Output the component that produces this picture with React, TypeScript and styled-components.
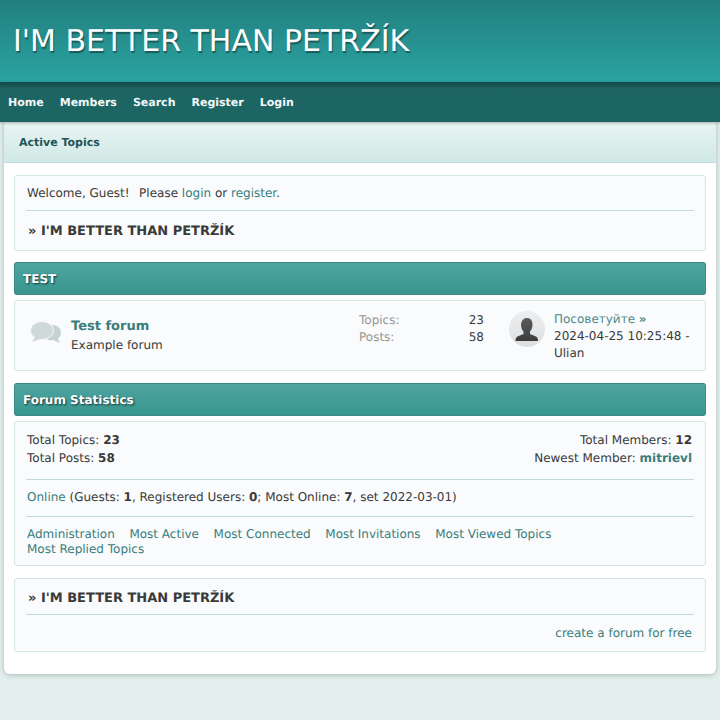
import * as React from "react";
import styled, { createGlobalStyle } from "styled-components";

const GlobalStyle = createGlobalStyle`
  html, body {
    margin: 0;
    padding: 0;
    background: #e3efec;
  }
  body {
    font-family: "DejaVu Sans", sans-serif;
    font-size: 12px;
    color: #3a3a3a;
    text-rendering: geometricPrecision;
  }
  * { box-sizing: border-box; }
`;

const Page = styled.div`
  width: 720px;
  height: 720px;
  overflow: hidden;
`;

const Header = styled.header`
  height: 82px;
  padding: 23px 13px 0;
  background: linear-gradient(#22807f, #2aa3a1);
`;

const Logo = styled.h1`
  margin: 0;
  font-size: 30px;
  line-height: 37px;
  font-weight: 400;
  color: #fff;
  text-shadow: 1px 2px 1px #1a5a5a;
`;

const Nav = styled.nav`
  height: 40px;
  display: flex;
  align-items: center;
  gap: 16px;
  padding: 0 8px;
  background: linear-gradient(#164b4b, #1d6563 16%, #1d6563);
  border-top: 1px solid #174a4a;
  box-shadow: 0 1px 3px rgba(0, 0, 0, 0.3);
  position: relative;
`;

const NavLink = styled.a`
  font-size: 11px;
  font-weight: 700;
  color: #f2f7f7;
`;

const Wrapper = styled.main`
  margin: 0 4px;
  height: 552px;
  background: #fff;
  border-radius: 0 0 6px 6px;
  box-shadow: 0 1px 5px rgba(60, 90, 90, 0.35);
`;

const SubHeader = styled.div`
  height: 41px;
  padding-left: 15px;
  display: flex;
  align-items: center;
  background: linear-gradient(#e9f5f3, #d0e9e6);
  border-bottom: 1px solid #c5dcdc;
  font-size: 11px;
  font-weight: 700;
  color: #1f5556;
`;

const Content = styled.div`
  padding: 12px 10px 0;
  display: flex;
  flex-direction: column;
`;

const Box = styled.section<{ $mt?: number; $h: number }>`
  height: ${(p) => p.$h}px;
  margin-top: ${(p) => p.$mt ?? 0}px;
  background: #f9fbfc;
  border: 1px solid #d2e8e6;
  border-radius: 3px;
  padding: 0 12px;
`;

const Line = styled.div<{ $h?: number }>`
  line-height: ${(p) => p.$h ?? 15}px;
`;

const Please = styled.span`
  margin-left: 9.500px;
`;

const A = styled.a`
  color: #3a7d7d;
`;

const Divider = styled.hr`
  margin: 0 -1px;
  border: 0;
  border-top: 1px solid #bfdcd9;
`;

const Crumb = styled.div<{ $h: number; $pt?: number }>`
  font-size: 13px;
  font-weight: 700;
  padding: ${(p) => p.$pt ?? 0}px 0 0 1px;
  line-height: ${(p) => p.$h}px;
`;

const Bar = styled.h2<{ $mt: number }>`
  margin: ${(p) => p.$mt}px 0 0;
  height: 33px;
  padding-left: 8px;
  display: flex;
  align-items: center;
  font-size: 12px;
  font-weight: 700;
  color: #fff;
  text-shadow: 1px 1px 2px #0e3232;
  background: linear-gradient(#4fa4a1, #38968f);
  border: 1px solid #3d8a88;
  border-top-color: #3b8583;
  border-radius: 3px;
`;

const ForumRow = styled.div`
  height: 100%;
  display: flex;
  align-items: center;
`;

const ForumIcon = styled.svg`
  width: 32px;
  height: 24px;
  margin: 0 9px 5px 3px;
  flex: none;
`;

const ForumInfo = styled.div`
  width: 288px;
  flex: none;
`;

const ForumTitle = styled.a`
  display: block;
  font-size: 13px;
  font-weight: 700;
  line-height: 19px;
  color: #3a7d7d;
`;

const ForumStats = styled.div`
  width: 125px;
  flex: none;
  margin-bottom: 13px;
`;

const StatRow = styled.div`
  display: flex;
  justify-content: space-between;
  line-height: 17px;
`;

const StatLabel = styled.span`
  color: #969696;
`;

const Avatar = styled.svg`
  width: 36px;
  height: 36px;
  margin: 0 9px 13px 25px;
  flex: none;
`;

const LastPost = styled.div`
  width: 150px;
  line-height: 17px;
  margin-top: 2px;
`;

const TopicLink = styled.a`
  color: #4f8a8a;
`;

const TopicArrow = styled.b`
  color: #4f8a8a;
`;

const SplitRow = styled.div`
  display: flex;
  justify-content: space-between;
  padding: 9px 1px 12px 0;
`;

const RightCol = styled.div`
  text-align: right;
`;

const OnlineLine = styled.div`
  line-height: 15px;
  padding: 10px 0 11px;
`;

const LinkList = styled.div`
  display: flex;
  flex-wrap: wrap;
  column-gap: 14.600px;
  line-height: 15px;
  padding-top: 10px;
  max-width: 600px;
`;

const FootLink = styled.div`
  text-align: right;
  padding: 11px 1px 0 0;
  line-height: 15px;
`;

export default function App() {
  return (
    <Page>
      <GlobalStyle />
      <Header>
        <Logo>I'M BETTER THAN PETRŽÍK</Logo>
      </Header>
      <Nav>
        <NavLink>Home</NavLink>
        <NavLink>Members</NavLink>
        <NavLink>Search</NavLink>
        <NavLink>Register</NavLink>
        <NavLink>Login</NavLink>
      </Nav>
      <Wrapper>
        <SubHeader>Active Topics</SubHeader>
        <Content>
          <Box $h={76}>
            <Line $h={34}>
              Welcome, Guest!<Please>Please</Please> <A>login</A> or <A>register</A>.
            </Line>
            <Divider />
            <Crumb $h={41}>» I'M BETTER THAN PETRŽÍK</Crumb>
          </Box>
          <Bar $mt={11}>TEST</Bar>
          <Box $mt={5} $h={71}>
            <ForumRow>
              <ForumIcon viewBox="0 0 32 24">
                <path
                  d="M22 4c5 0 9 3 9 7.500 0 2.500-1 4.500-3 6l2 4.500-7-3c-2 .3-4 .2-6-.5z"
                  fill="#c6d3d2"
                />
                <ellipse cx="12" cy="9.500" rx="11.500" ry="9" fill="#ced9d8" stroke="#f5f8f8" strokeWidth="1" />
                <path d="M5 16l-3 5 9-3z" fill="#ced9d8" />
              </ForumIcon>
              <ForumInfo>
                <ForumTitle>Test forum</ForumTitle>
                <Line $h={19}>Example forum</Line>
              </ForumInfo>
              <ForumStats>
                <StatRow>
                  <StatLabel>Topics:</StatLabel>
                  <span>23</span>
                </StatRow>
                <StatRow>
                  <StatLabel>Posts:</StatLabel>
                  <span>58</span>
                </StatRow>
              </ForumStats>
              <Avatar viewBox="0 0 36 36">
                <defs>
                  <linearGradient id="avatarBg" x1="0" y1="0" x2="0" y2="1">
                    <stop offset="0" stopColor="#edeef0" />
                    <stop offset="1" stopColor="#dcdfe1" />
                  </linearGradient>
                  <linearGradient id="avatarFg" x1="0" y1="0" x2="0" y2="1">
                    <stop offset="0" stopColor="#5c5c5c" />
                    <stop offset="1" stopColor="#3c3c3c" />
                  </linearGradient>
                </defs>
                <circle cx="18" cy="18" r="18" fill="url(#avatarBg)" />
                <path
                  d="M18 7c3.500 0 5.500 2.500 5.500 6.500 0 3-1 5.500-2.500 7v2.500l6 2.500c1.500.7 2 2.500 2 4.500H6.500c0-2 .5-3.800 2-4.500l6-2.500v-2.500c-1.500-1.500-2.500-4-2.500-7C12.500 9.500 14.500 7 18 7z"
                  fill="url(#avatarFg)"
                />
              </Avatar>
              <LastPost>
                <TopicLink>Посоветуйте</TopicLink> <TopicArrow>»</TopicArrow>
                <br />
                2024-04-25 10:25:48 - Ulian
              </LastPost>
            </ForumRow>
          </Box>
          <Bar $mt={12}>Forum Statistics</Bar>
          <Box $mt={5} $h={145}>
            <SplitRow>
              <div>
                <Line $h={18}>
                  Total Topics: <b>23</b>
                </Line>
                <Line $h={18}>
                  Total Posts: <b>58</b>
                </Line>
              </div>
              <RightCol>
                <Line $h={18}>
                  Total Members: <b>12</b>
                </Line>
                <Line $h={18}>
                  Newest Member: <A as="b">mitrievl</A>
                </Line>
              </RightCol>
            </SplitRow>
            <Divider />
            <OnlineLine>
              <A>Online</A> (Guests: <b>1</b>, Registered Users: <b>0</b>; Most Online: <b>7</b>, set 2022-03-01)
            </OnlineLine>
            <Divider />
            <LinkList>
              <A>Administration</A>
              <A>Most Active</A>
              <A>Most Connected</A>
              <A>Most Invitations</A>
              <A>Most Viewed Topics</A>
              <A>Most Replied Topics</A>
            </LinkList>
          </Box>
          <Box $mt={12} $h={74}>
            <Crumb $h={31} $pt={4}>» I'M BETTER THAN PETRŽÍK</Crumb>
            <Divider />
            <FootLink>
              <A>create a forum for free</A>
            </FootLink>
          </Box>
        </Content>
      </Wrapper>
    </Page>
  );
}
